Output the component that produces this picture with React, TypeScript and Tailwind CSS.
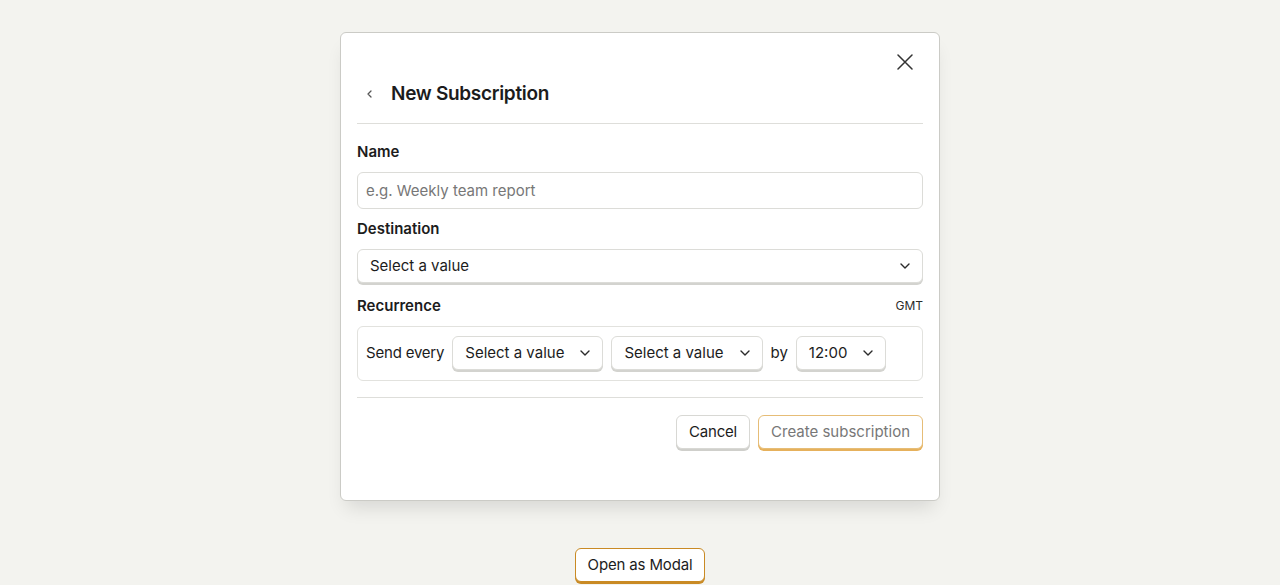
import { useState } from "react";

function ChevronDown() {
  return (
    <svg width="10" height="6" viewBox="0 0 10 6" fill="none" className="shrink-0">
      <path d="M1 1l4 4 4-4" stroke="#2b2b2b" strokeWidth="1.4" strokeLinecap="round" strokeLinejoin="round" />
    </svg>
  );
}

function SelectButton({ label, className = "" }: { label: string; className?: string }) {
  return (
    <button
      type="button"
      className={`flex h-[34px] items-center justify-between gap-4 rounded-md border border-[#dcdcd8] bg-white pl-3 pr-3 text-[15px] text-[#1c1c1c] shadow-[0_2px_0_0_#d3d3cf] ${className}`}
    >
      <span>{label}</span>
      <ChevronDown />
    </button>
  );
}

export default function App() {
  const [name, setName] = useState("");

  return (
    <div className="min-h-[585px] bg-[#f3f3ef] pt-8 font-['Inter','Noto_Sans',sans-serif] text-[#1c1c1c]">
      <div className="mx-auto w-[600px] rounded-md border border-[#cbcbc6] bg-white px-4 pt-[13px] pb-[51px] shadow-[0_12px_18px_-6px_rgba(0,0,0,0.12)]">
        {/* Close */}
        <div className="flex justify-end">
          <button type="button" className="mr-[2px] flex h-8 w-8 items-center justify-center">
            <svg width="16" height="16" viewBox="0 0 16 16" fill="none">
              <path d="M1 1l14 14M15 1L1 15" stroke="#333" strokeWidth="1.5" strokeLinecap="round" />
            </svg>
          </button>
        </div>

        {/* Header */}
        <div className="mt-[2px] box-content flex h-7 items-center gap-[10px] border-b border-[#dededa] pb-[15px]">
          <button type="button" className="flex h-6 w-6 items-center justify-center">
            <svg width="5" height="8" viewBox="0 0 5 8" fill="none">
              <path d="M4 1L1 4l3 3" stroke="#555" strokeWidth="1.3" strokeLinecap="round" strokeLinejoin="round" />
            </svg>
          </button>
          <h2 className="text-[19px] font-semibold tracking-[-0.3px]">New Subscription</h2>
        </div>

        {/* Name */}
        <div className="mt-[17px] text-[15px] font-semibold leading-[22px]">Name</div>
        <input
          value={name}
          onChange={(e) => setName(e.target.value)}
          placeholder="e.g. Weekly team report"
          className="mt-[9px] h-[37px] w-full rounded-md border border-[#dcdcd8] px-2 text-[15px] outline-none placeholder:text-[#777]"
        />

        {/* Destination */}
        <div className="mt-[9px] text-[15px] font-semibold leading-[22px]">Destination</div>
        <SelectButton label="Select a value" className="mt-[9px] w-full" />

        {/* Recurrence */}
        <div className="mt-[12px] flex items-center justify-between leading-[22px]">
          <span className="text-[15px] font-semibold">Recurrence</span>
          <span className="text-[12px] text-[#2b2b2b]">GMT</span>
        </div>
        <div className="mt-[9px] flex items-center gap-2 rounded-md border border-[#e2e2de] px-2 pt-[9px] pb-[10px]">
          <span className="text-[15px] tracking-[-0.2px]">Send every</span>
          <SelectButton label="Select a value" />
          <SelectButton label="Select a value" />
          <span className="text-[15px]">by</span>
          <SelectButton label="12:00" />
        </div>

        {/* Footer */}
        <div className="mt-4 flex justify-end gap-2 border-t border-[#dededa] pt-[17px]">
          <button
            type="button"
            className="h-[34px] rounded-md border border-[#d8d8d4] bg-white px-3 text-[15px] tracking-[-0.2px] shadow-[0_2px_0_0_#cfcfcb]"
          >
            Cancel
          </button>
          <button
            type="button"
            disabled
            className="h-[34px] rounded-md border border-[#e6bd77] bg-white px-3 text-[15px] text-[#777] shadow-[0_2px_0_0_#e6b15c]"
          >
            Create subscription
          </button>
        </div>
      </div>

      <div className="mt-[47px] flex justify-center">
        <button
          type="button"
          className="h-[34px] rounded-md border border-[#c98a24] bg-white px-3 text-[15px] tracking-[-0.15px] shadow-[0_2px_0_0_#c98a24]"
        >
          Open as Modal
        </button>
      </div>
    </div>
  );
}
